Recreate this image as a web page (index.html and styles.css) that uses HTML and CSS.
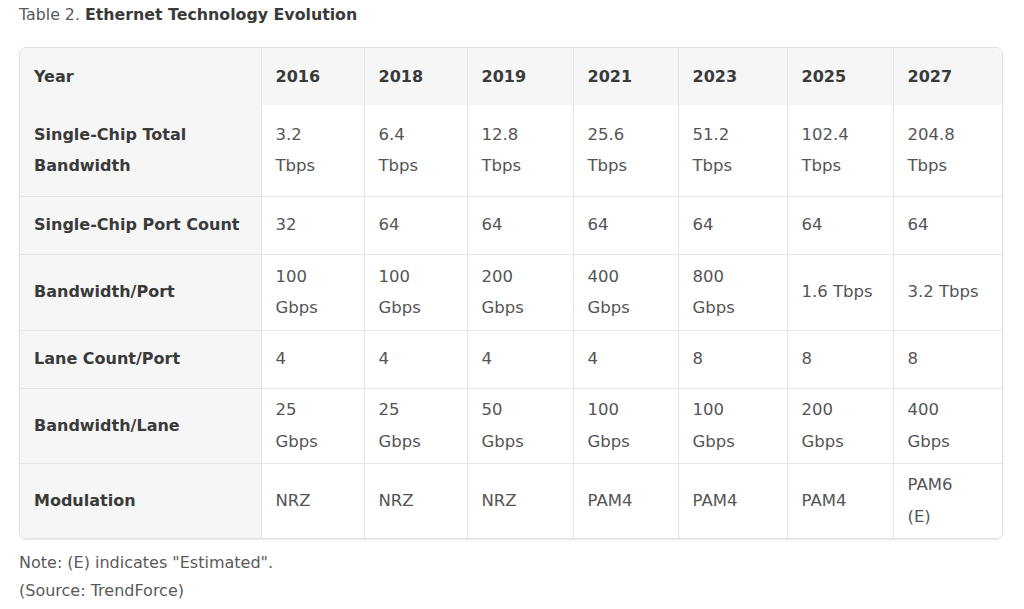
FILE: index.html
```html
<!DOCTYPE html>
<html lang="en">
<head>
<meta charset="utf-8">
<title>Ethernet Technology Evolution</title>
<link rel="stylesheet" href="styles.css">
</head>
<body>
<div class="page">
  <p class="caption">Table 2. <strong>Ethernet Technology Evolution</strong></p>
  <div class="table-wrap">
    <table class="data">
      <colgroup>
        <col class="c0"><col class="c1"><col class="c2"><col class="c3"><col class="c4"><col class="c5"><col class="c6"><col class="c7">
      </colgroup>
      <thead>
        <tr class="r-head">
          <th>Year</th><th>2016</th><th>2018</th><th>2019</th><th>2021</th><th>2023</th><th>2025</th><th>2027</th>
        </tr>
      </thead>
      <tbody>
        <tr class="r-xl">
          <th>Single-Chip Total<br>Bandwidth</th>
          <td>3.2<br>Tbps</td><td>6.4<br>Tbps</td><td>12.8<br>Tbps</td><td>25.6<br>Tbps</td><td>51.2<br>Tbps</td><td>102.4<br>Tbps</td><td>204.8<br>Tbps</td>
        </tr>
        <tr class="r-sm">
          <th>Single-Chip Port Count</th>
          <td>32</td><td>64</td><td>64</td><td>64</td><td>64</td><td>64</td><td>64</td>
        </tr>
        <tr class="r-md">
          <th>Bandwidth/Port</th>
          <td>100<br>Gbps</td><td>100<br>Gbps</td><td>200<br>Gbps</td><td>400<br>Gbps</td><td>800<br>Gbps</td><td>1.6 Tbps</td><td>3.2 Tbps</td>
        </tr>
        <tr class="r-sm">
          <th>Lane Count/Port</th>
          <td>4</td><td>4</td><td>4</td><td>4</td><td>8</td><td>8</td><td>8</td>
        </tr>
        <tr class="r-mdl">
          <th>Bandwidth/Lane</th>
          <td>25<br>Gbps</td><td>25<br>Gbps</td><td>50<br>Gbps</td><td>100<br>Gbps</td><td>100<br>Gbps</td><td>200<br>Gbps</td><td>400<br>Gbps</td>
        </tr>
        <tr class="r-mdl">
          <th>Modulation</th>
          <td>NRZ</td><td>NRZ</td><td>NRZ</td><td>PAM4</td><td>PAM4</td><td>PAM4</td><td>PAM6<br>(E)</td>
        </tr>
      </tbody>
    </table>
  </div>
  <div class="notes">
    <p class="note">Note: (E) indicates "Estimated".</p>
    <p class="note">(Source: TrendForce)</p>
  </div>
</div>
</body>
</html>
```
FILE: styles.css
```css
* { box-sizing: border-box; }
html, body { margin: 0; padding: 0; background: #fff; }
body {
  font-family: "DejaVu Sans", Inter, sans-serif;
  color: #444;
}
.page {
  padding: 5px 21px 0 19px;
}
.caption {
  margin: 0 0 22px;
  font-size: 15.8px;
  line-height: 20px;
  color: #5a5a5a;
}
.caption strong {
  font-weight: 700;
  color: #3a3a3a;
}
.table-wrap {
  border: 1px solid #e2e2e2;
  border-radius: 7px;
  overflow: hidden;
  box-shadow: 0 1px 2px rgba(0,0,0,0.10);
}
.data {
  width: 100%;
  border-collapse: collapse;
  table-layout: fixed;
  font-size: 16px;
  line-height: 31.5px;
}
.c0 { width: 241px; }
.c1 { width: 103px; }
.c2 { width: 103px; }
.c3 { width: 106px; }
.c4 { width: 105px; }
.c5 { width: 109px; }
.c6 { width: 106px; }
.c7 { width: auto; }
.data th, .data td {
  text-align: left;
  vertical-align: middle;
  padding: 0 6px 0 14px;
  border: 1px solid #e6e6e6;
}
.data tr:first-child th, .data tr:first-child td { border-top: 0; }
.data tr:last-child th, .data tr:last-child td { border-bottom: 0; }
.data th:first-child, .data td:first-child { border-left: 0; }
.data th:last-child, .data td:last-child { border-right: 0; }
.data th {
  font-weight: 700;
  color: #3a3a3a;
  background: #f6f6f6;
}
.data td {
  font-size: 16.5px;
  font-weight: 400;
  color: #555;
  background: #fff;
}
.r-head { height: 57px; }
.r-xl { height: 91px; }
.r-sm { height: 58px; }
.r-md { height: 76px; }
.r-mdl { height: 75px; }
.notes {
  margin-top: 10px;
}
.note {
  margin: 0;
  font-size: 16px;
  line-height: 28px;
  color: #5a5a5a;
}
```
